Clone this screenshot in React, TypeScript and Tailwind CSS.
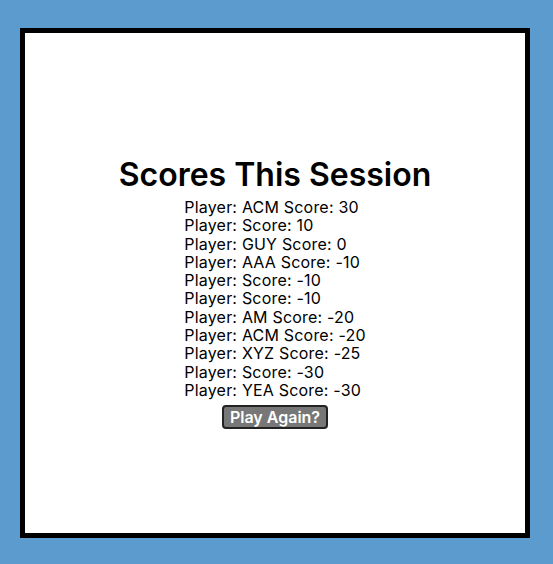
const scores = [
  { name: "ACM", score: 30 },
  { name: "", score: 10 },
  { name: "GUY", score: 0 },
  { name: "AAA", score: -10 },
  { name: "", score: -10 },
  { name: "", score: -10 },
  { name: "AM", score: -20 },
  { name: "ACM", score: -20 },
  { name: "XYZ", score: -25 },
  { name: "", score: -30 },
  { name: "YEA", score: -30 },
];

export default function App() {
  return (
    <div className="min-h-screen bg-[#5b9bcd] pl-[20px] pt-[28px] font-['Inter',sans-serif] text-black">
      <div className="flex h-[510px] w-[510px] flex-col items-center border-[5px] border-black bg-white pt-[122px]">
        <h1 className="text-[32px] font-semibold leading-[40px]">Scores This Session</h1>
        <ul className="mt-[3px] flex flex-col items-start text-[16px] leading-[18.3px] tracking-[0.2px]">
          {scores.map((s, i) => (
            <li key={i}>
              Player: {s.name ? `${s.name} ` : ""}Score: {s.score}
            </li>
          ))}
        </ul>
        <button className="mt-[6px] rounded-[4px] border-2 border-[#222] bg-[#777] px-[6px] text-[16px] font-semibold leading-[20px] text-white">
          Play Again?
        </button>
      </div>
    </div>
  );
}
